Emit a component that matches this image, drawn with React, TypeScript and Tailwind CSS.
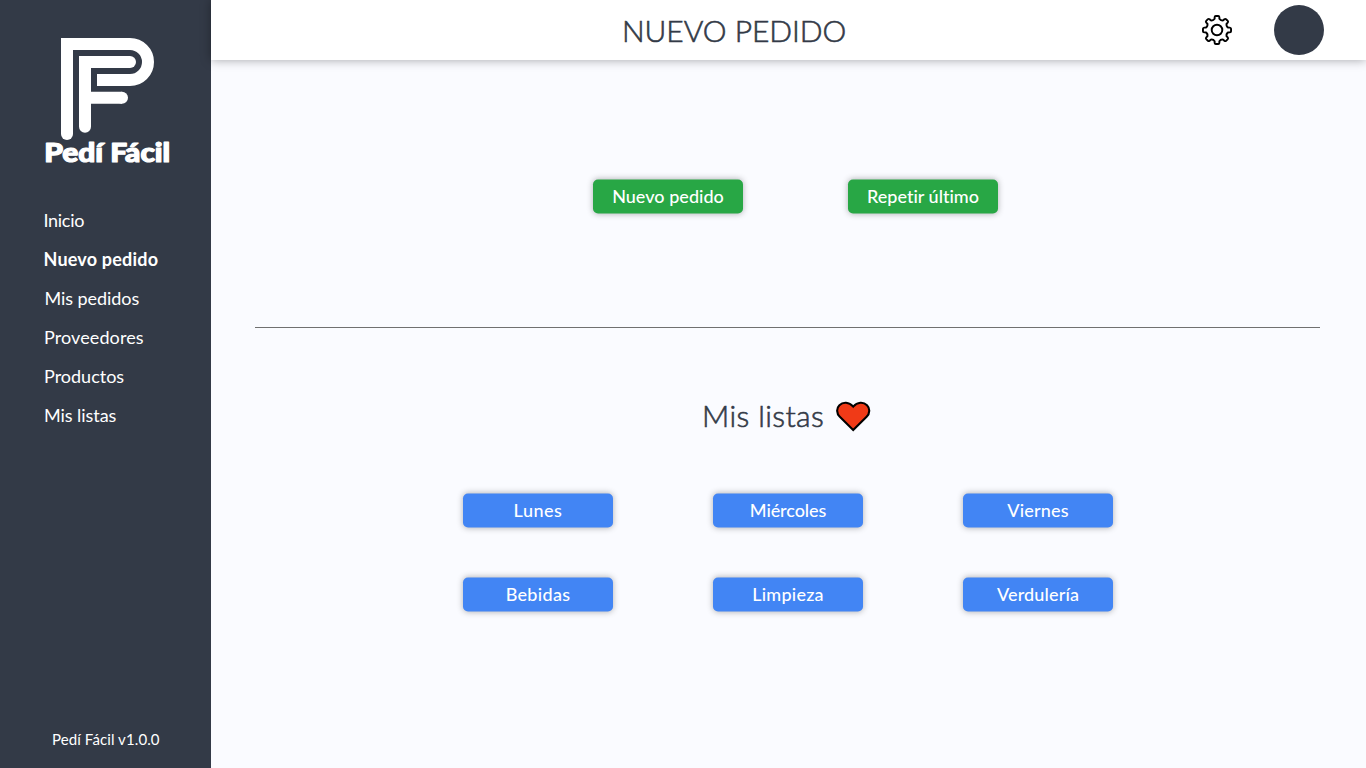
const FONT = "font-['Lato','Liberation_Sans',sans-serif] [font-variant-ligatures:none]";

const nav = [
  { label: "Inicio", cls: "tracking-[-0.3px]" },
  { label: "Nuevo pedido", cls: "pt-px font-bold tracking-[0.2px]" },
  { label: "Mis pedidos", cls: "pl-px tracking-[-0.07px]" },
  { label: "Proveedores", cls: "pl-[0.5px] tracking-[0.1px]" },
  { label: "Productos", cls: "pl-[0.5px] tracking-[0px]" },
  { label: "Mis listas", cls: "pl-[0.5px] tracking-[-0.05px]" },
];

const lists = [
  { label: "Lunes", cls: "tracking-[0.5px]" },
  { label: "Miércoles", cls: "tracking-[-0.1px]" },
  { label: "Viernes", cls: "tracking-[0.2px]" },
  { label: "Bebidas", cls: "tracking-[0.3px]" },
  { label: "Limpieza", cls: "tracking-[0.25px]" },
  { label: "Verdulería", cls: "tracking-[0.15px]" },
];

function polar(r: number, deg: number) {
  const a = (deg * Math.PI) / 180;
  return `${(15 + r * Math.cos(a)).toFixed(2)} ${(15 + r * Math.sin(a)).toFixed(2)}`;
}

const gearPath =
  Array.from({ length: 8 }, (_, i) => {
    const a = i * 45;
    return `${i ? "L" : "M"}${polar(11.4, a - 12)} L${polar(13, a - 10.5)} Q${polar(14.2, a - 9)} ${polar(14.1, a - 5)} L${polar(14.1, a + 5)} Q${polar(14.2, a + 9)} ${polar(13, a + 10.5)} L${polar(11.4, a + 12)} Q${polar(9.8, a + 22.5)} ${polar(11.4, a + 33)}`;
  }).join(" ") + "Z";

function Gear() {
  return (
    <svg width="30" height="30" viewBox="0 0 30 30" fill="none" stroke="#000" strokeWidth="1.9" strokeLinejoin="round" className="overflow-visible">
      <path d={gearPath} />
      <circle cx="15" cy="15" r="5.3" />
    </svg>
  );
}

function Heart() {
  return (
    <svg width="35" height="31" viewBox="0 0 35 31" fill="#f03a17" stroke="#000" strokeWidth="2.1">
      <path d="M17.2 29 L3.8 15.8 C0.4 12.4 0.3 7.2 3.4 4.2 C7 0.7 13 0.8 17.2 5.6 C21.4 0.8 27.4 0.7 31 4.2 C34.1 7.2 34 12.4 30.6 15.8 Z" />
    </svg>
  );
}

function Logo() {
  return (
    <svg width="130" height="130" viewBox="43 37 130 130" fill="none" stroke="#fff" strokeWidth="12">
      <path d="M67 134 V44 H130 A18 18 0 0 1 130 80 H97" />
      <path d="M85 126.7 V62 H130 M85 97.7 H122" />
      <g fill="#fff" stroke="none">
        <circle cx="67" cy="134" r="6" />
        <circle cx="85" cy="126.7" r="6" />
        <circle cx="130" cy="62" r="6" />
        <circle cx="122" cy="97.7" r="6" />
      </g>
      <text x="44.2" y="162.2" textLength="126" lengthAdjust="spacingAndGlyphs" fill="#fff" strokeWidth="1.2" strokeLinejoin="round" className="text-[26.5px] font-black">
        Pedí Fácil
      </text>
    </svg>
  );
}

const BTN = "flex h-[34px] w-[150px] -translate-y-[0.5px] items-center justify-center rounded-[5px] pb-0.5 text-lg font-medium leading-none text-white shadow-[0_0_6px_rgba(0,0,0,0.3)]";

export default function App() {
  return (
    <div className={`flex h-screen w-full overflow-hidden bg-[#fafbff] ${FONT}`}>
      <aside className="flex w-[211px] shrink-0 flex-col bg-[#333a47] text-white">
        <div className="pl-[43px] pt-[37px]">
          <Logo />
        </div>
        <nav className="mt-[33px] flex flex-col pl-[43.5px]">
          {nav.map((n) => (
            <a key={n.label} className={`flex h-[39px] items-center whitespace-nowrap text-lg leading-none ${n.cls}`}>
              {n.label}
            </a>
          ))}
        </nav>
        <footer className="mb-[19px] mt-auto pl-[52px] text-[15px] leading-5 tracking-[0.1px]">Pedí Fácil v1.0.0</footer>
      </aside>
      <div className="flex grow flex-col">
        <header className="z-10 flex h-[60px] shrink-0 items-center bg-white pr-[42px] shadow-[0_0_10px_rgba(0,0,0,0.35)]">
          <h1 className="ml-[411px] -mt-px whitespace-nowrap text-[30px] font-light leading-9 tracking-[-0.05px] text-[#333a47] [-webkit-text-stroke:0.6px_#333a47]">NUEVO PEDIDO</h1>
          <div className="ml-auto flex items-center gap-[42px]">
            <Gear />
            <div className="size-[50px] rounded-full bg-[#333a47]" />
          </div>
        </header>
        <main className="flex grow flex-col">
          <div className="ml-[382px] mt-[120px] flex gap-[105px]">
            <button className={`${BTN} bg-[#28a745] tracking-[0.03px]`}>Nuevo pedido</button>
            <button className={`${BTN} bg-[#28a745] tracking-[0px]`}>Repetir último</button>
          </div>
          <div className="ml-11 mr-[46px] mt-[113px] h-px bg-[#707070]" />
          <div className="ml-[491px] mt-[73px] flex h-[31px] items-center gap-3">
            <h2 className="-mt-[3px] whitespace-nowrap text-[30px] font-light leading-9 tracking-[0.4px] text-[#333a47] [-webkit-text-stroke:0.6px_#333a47]">Mis listas</h2>
            <Heart />
          </div>
          <div className="ml-[252px] mt-[62px] grid grid-cols-[repeat(3,150px)] gap-x-[100px] gap-y-[50px]">
            {lists.map((l) => (
              <button key={l.label} className={`${BTN} bg-[#4285f4] ${l.cls}`}>
                {l.label}
              </button>
            ))}
          </div>
        </main>
      </div>
    </div>
  );
}
